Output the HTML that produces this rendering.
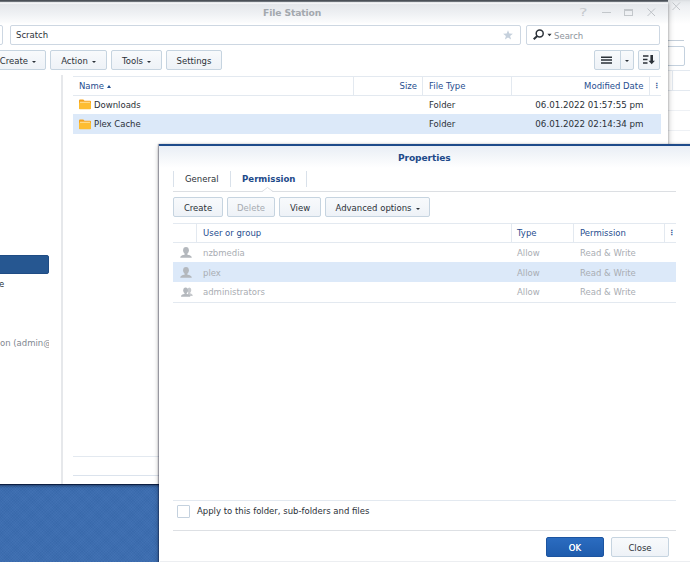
<!DOCTYPE html>
<html><head><meta charset="utf-8">
<style>
*{box-sizing:border-box;margin:0;padding:0}
html,body{width:690px;height:562px;overflow:hidden}
body{background:#3b6db1;background-image:repeating-linear-gradient(45deg,rgba(255,255,255,.015) 0 1px,rgba(0,0,0,.015) 1px 2px),repeating-linear-gradient(-45deg,rgba(255,255,255,.015) 0 1px,rgba(0,0,0,.015) 1px 2px);font-family:"DejaVu Sans","Liberation Sans",sans-serif;font-size:8.5px;color:#2b3138;position:relative}
.abs{position:absolute}
.t{position:absolute;white-space:nowrap;line-height:12px;height:12px}
.btn{position:absolute;height:20px;border:1px solid #c6d4e0;border-radius:2px;background:linear-gradient(#f8fafc,#eef2f7);text-align:center;line-height:20.6px;color:#2b3138;white-space:nowrap}
.inp{position:absolute;height:20px;border:1px solid #cdd7e2;border-radius:2px;background:#fff}
.hl{position:absolute;height:1px;background:#e3e9f0}
.vl{position:absolute;width:1px;background:#e3e9f0}
.hd{color:#1f4e8f}
.gr{color:#a9adb3}
.car{display:inline-block;width:0;height:0;border-left:2.8px solid transparent;border-right:2.8px solid transparent;border-top:2.8px solid #2b3138;vertical-align:middle;margin-left:4px}
</style></head><body>
<!-- back window on right -->
<div class="abs" id="backwin" style="left:660px;top:0px;width:30px;height:200px;background:linear-gradient(#d9dce0 0,#e6e9ec 2px,#eef0f3 6px,#ffffff 24px)">
  <svg class="abs" style="left:12px;top:2px" width="9" height="9" viewBox="0 0 9 9"><path d="M0.5 0.5L8 8M8 0.5L0.5 8" stroke="#c3c7cb" stroke-width="1" fill="none"/></svg>
  <div class="hl" style="left:8px;top:40px;width:16px;background:#c3ced9"></div>
  <div class="abs" style="left:0;top:46px;width:25px;height:20px;border:1px solid #c4d1de;border-radius:2px"></div>
  <div class="hl" style="left:8px;top:70px;width:22px"></div>
  <div class="vl" style="left:12px;top:71px;height:20px"></div>
  <div class="hl" style="left:8px;top:90px;width:22px"></div>
  <div class="hl" style="left:8px;top:110px;width:22px;background:#eef1f5"></div>
  <div class="hl" style="left:8px;top:130px;width:22px;background:#eef1f5"></div>
</div>
<!-- desktop top bar -->
<div class="abs" style="left:0;top:0;width:668px;height:2px;background:linear-gradient(#474d56 0,#5d646c 50%,#9da3aa 100%)"></div>
<!-- File Station window -->
<div class="abs" id="fs" style="left:-10px;top:2px;width:678px;height:482px;background:#fff;box-shadow:0 1px 0 rgba(8,22,55,.8),0 2px 2px rgba(0,0,20,.3),0 0 6px rgba(0,0,0,.3)">
  <div class="abs" style="left:0;top:0;width:678px;height:23px;background:linear-gradient(#d4d8dc 0,#f3f4f6 .9px,#f3f4f6 1.5px,#e4e7eb 2.1px,#eef0f3 11px,#fafbfc 20px,#ffffff 22px)"></div>
</div>
<div class="t" style="left:263px;top:7px;font-weight:bold;font-size:9.2px;color:#a3a8ae;letter-spacing:-.12px">File Station</div>
<!-- window icons -->
<div class="t" style="left:579.3px;top:6.8px;font-size:10px;color:#c6cace;transform:scaleX(1.6);transform-origin:0 0">?</div>
<div class="abs" style="left:601.5px;top:12px;width:9px;height:1px;background:#c3c7cb"></div>
<div class="abs" style="left:624px;top:9px;width:9px;height:7px;border:1px solid #c3c7cb;border-top-width:2px"></div>
<svg class="abs" style="left:647px;top:8px" width="9" height="9" viewBox="0 0 9 9"><path d="M0.5 0.5L8 8M8 0.5L0.5 8" stroke="#bfc3c8" stroke-width="1" fill="none"/></svg>
<!-- address row -->
<div class="inp" style="left:-10px;top:25px;width:13px"></div>
<div class="inp" style="left:10px;top:25px;width:511px"></div>
<div class="t" style="left:16px;top:29px">Scratch</div>
<svg class="abs" style="left:503px;top:30px" width="10" height="10" viewBox="0 0 10 10"><path d="M5 0.2L6.3 3.6L9.9 3.8L7.1 6L8.1 9.5L5 7.5L1.9 9.5L2.9 6L0.1 3.8L3.7 3.6Z" fill="#c5d0dc"/></svg>
<div class="inp" style="left:526px;top:25px;width:134px"></div>
<svg class="abs" style="left:532px;top:28px" width="22" height="13" viewBox="0 0 22 13"><circle cx="7.7" cy="5.4" r="3.5" stroke="#2b3138" stroke-width="1.5" fill="none"/><path d="M5.3 8L1.7 11.3" stroke="#2b3138" stroke-width="2" fill="none"/><path d="M15.4 5.8h4.2l-2.1 2.4z" fill="#2b3138"/></svg>
<div class="t gr" style="left:554px;top:29.5px;color:#8d949c">Search</div>
<!-- toolbar -->
<div class="btn" style="left:-20px;top:50px;width:66px;text-align:right;padding-right:9px">Create<span class="car"></span></div>
<div class="btn" style="left:50px;top:50px;width:57px">Action<span class="car"></span></div>
<div class="btn" style="left:111px;top:50px;width:51px">Tools<span class="car"></span></div>
<div class="btn" style="left:166px;top:50px;width:56px">Settings</div>
<div class="btn" style="left:594px;top:50px;width:27px;border-radius:2px 0 0 2px"></div>
<div class="btn" style="left:620px;top:50px;width:14px;border-radius:0 2px 2px 0"></div>
<div class="btn" style="left:638px;top:50px;width:22px"></div>
<svg class="abs" style="left:601px;top:56px" width="12" height="9" viewBox="0 0 12 9"><path d="M0 1.2h11M0 4.1h11M0 7h11" stroke="#2b3138" stroke-width="1.5"/></svg>
<div class="car abs" style="left:624.5px;top:60px;margin:0"></div>
<svg class="abs" style="left:643px;top:55px" width="13" height="10" viewBox="0 0 13 10"><path d="M0 1h5.5M0 4.5h4.5M0 8h4.5" stroke="#2b3138" stroke-width="1.5"/><path d="M8.7 0v6.5" stroke="#2b3138" stroke-width="2.6"/><path d="M5.5 5.8h6.4L8.7 9.3z" fill="#2b3138"/></svg>
<!-- sidebar -->
<div class="vl" style="left:61px;top:75px;height:409px;background:#e6e8eb;width:2px"></div>
<div class="abs" style="left:-5px;top:254.5px;width:53.7px;height:19px;background:#265791;border:1px solid #1f4c84;border-radius:2px"></div>
<div class="t" style="left:-1px;top:278px">e</div>
<div class="t" style="left:0px;top:337px;color:#7f8790;width:48.5px;overflow:hidden">on (admin@</div>
<!-- file table -->
<div class="hl" style="left:73px;top:76px;width:588px"></div>
<div class="hl" style="left:73px;top:95px;width:588px"></div>
<div class="vl" style="left:353px;top:77px;height:18px"></div>
<div class="vl" style="left:422px;top:77px;height:18px"></div>
<div class="vl" style="left:511px;top:77px;height:18px"></div>
<div class="vl" style="left:649px;top:77px;height:18px"></div>
<div class="t hd" style="left:79px;top:80px">Name <span style="display:inline-block;width:0;height:0;border-left:2.5px solid transparent;border-right:2.5px solid transparent;border-bottom:3px solid #1f4e8f;vertical-align:1.5px"></span></div>
<div class="t hd" style="left:360px;width:57px;top:80px;text-align:right">Size</div>
<div class="t hd" style="left:429px;top:80px">File Type</div>
<div class="t hd" style="left:520px;width:123.4px;top:80px;text-align:right">Modified Date</div>
<div class="t hd" style="left:653.2px;top:79.5px;font-weight:bold;font-size:7px">⋮</div>
<div class="abs" style="left:73px;top:114px;width:588px;height:20px;background:#dce9f9"></div>
<svg class="abs" style="left:79px;top:98px" width="12" height="12" viewBox="0 0 12 12"><path d="M0 2.6a1 1 0 0 1 1-1h3.3l1.2 1.2H11a1 1 0 0 1 1 1V10a1 1 0 0 1-1 1H1a1 1 0 0 1-1-1z" fill="#f5a31d"/><path d="M1 3.8h10v2H1z" fill="#fff6dc"/><path d="M0 5.2a.8.8 0 0 1 .8-.8H11.2a.8.8 0 0 1 .8.8V10.3a1 1 0 0 1-1 1H1a1 1 0 0 1-1-1z" fill="#fdbd31"/></svg>
<svg class="abs" style="left:79px;top:118px" width="12" height="12" viewBox="0 0 12 12"><path d="M0 2.6a1 1 0 0 1 1-1h3.3l1.2 1.2H11a1 1 0 0 1 1 1V10a1 1 0 0 1-1 1H1a1 1 0 0 1-1-1z" fill="#f5a31d"/><path d="M1 3.8h10v2H1z" fill="#fff6dc"/><path d="M0 5.2a.8.8 0 0 1 .8-.8H11.2a.8.8 0 0 1 .8.8V10.3a1 1 0 0 1-1 1H1a1 1 0 0 1-1-1z" fill="#fdbd31"/></svg>
<div class="t" style="left:94px;top:99px">Downloads</div>
<div class="t" style="left:94px;top:118px">Plex Cache</div>
<div class="t" style="left:429px;top:99px">Folder</div>
<div class="t" style="left:429px;top:118px">Folder</div>
<div class="t" style="left:500px;width:143.6px;text-align:right;top:99px;font-size:8.7px">06.01.2022 01:57:55 pm</div>
<div class="t" style="left:500px;width:143.6px;text-align:right;top:118px;font-size:8.7px">06.01.2022 02:14:34 pm</div>
<div class="hl" style="left:73px;top:456px;width:588px"></div>
<div class="hl" style="left:73px;top:475px;width:588px;background:#dbe3ed"></div>
<!-- Properties dialog -->
<div class="abs" id="dlg" style="left:159px;top:144px;width:540px;height:430px;background:#fff;border-top:2px solid #1d4a8a;box-shadow:-1px 0 1px rgba(0,0,30,.3),0 2px 5px rgba(0,0,0,.36)">
  <div class="abs" style="left:0;top:0;width:540px;height:22px;background:linear-gradient(#e9eef5 0,#ffffff 100%)"></div>
</div>
<div class="t" style="left:398px;top:152px;font-weight:bold;font-size:9.1px;color:#1d4a8a;letter-spacing:-.1px">Properties</div>
<!-- tabs -->
<div class="vl" style="left:173px;top:170.5px;height:16px;background:#d9e1ea"></div>
<div class="vl" style="left:230px;top:170.5px;height:16px;background:#d9e1ea"></div>
<div class="vl" style="left:306px;top:170.5px;height:16px;background:#d9e1ea"></div>
<div class="t" style="left:185px;top:172.5px">General</div>
<div class="t" style="left:242px;top:172.5px;font-weight:bold;color:#1d4a8a;font-size:8.6px">Permission</div>
<div class="hl" style="left:173px;top:191px;width:503px;background:#dcdfe3"></div>
<svg class="abs" style="left:262px;top:187px" width="11" height="6" viewBox="0 0 11 6"><path d="M0 4.5L5.5 0.5L11 4.5" fill="#fff" stroke="#dcdfe3" stroke-width="1"/><rect x="1" y="4.2" width="9" height="2" fill="#fff"/></svg>
<!-- dialog toolbar -->
<div class="btn" style="left:173px;top:197px;width:50px">Create</div>
<div class="btn" style="left:227px;top:197px;width:48px;color:#a6abb1">Delete</div>
<div class="btn" style="left:279px;top:197px;width:42px">View</div>
<div class="btn" style="left:325px;top:197px;width:105px">Advanced options<span class="car"></span></div>
<!-- dialog table -->
<div class="hl" style="left:173px;top:223px;width:503px"></div>
<div class="hl" style="left:173px;top:242px;width:503px"></div>
<div class="vl" style="left:196px;top:224px;height:18px"></div>
<div class="vl" style="left:511px;top:224px;height:18px"></div>
<div class="vl" style="left:573px;top:224px;height:18px"></div>
<div class="vl" style="left:664px;top:224px;height:18px"></div>
<div class="t hd" style="left:203px;top:227px">User or group</div>
<div class="t hd" style="left:517px;top:227px">Type</div>
<div class="t hd" style="left:580px;top:227px">Permission</div>
<div class="t hd" style="left:668.2px;top:226.5px;font-weight:bold;font-size:7px">⋮</div>
<div class="abs" style="left:173px;top:262px;width:503px;height:20px;background:#dce9f9"></div>
<div class="hl" style="left:173px;top:302px;width:503px"></div>
<svg class="abs usr" style="left:180px;top:245.6px" width="12" height="12" viewBox="0 0 12 12"><ellipse cx="6" cy="4.3" rx="2.9" ry="3.4" fill="#b4b8bd"/><path d="M4.6 6.5h2.8v2.2c2.6.4 4.4 1 4.4 3.1H.2c0-2.1 1.8-2.7 4.4-3.1z" fill="#b4b8bd"/></svg>
<svg class="abs usr" style="left:180px;top:265.6px" width="12" height="12" viewBox="0 0 12 12"><ellipse cx="6" cy="4.3" rx="2.9" ry="3.4" fill="#b4b8bd"/><path d="M4.6 6.5h2.8v2.2c2.6.4 4.4 1 4.4 3.1H.2c0-2.1 1.8-2.7 4.4-3.1z" fill="#b4b8bd"/></svg>
<svg class="abs usr" style="left:181px;top:287.2px" width="12" height="10" viewBox="0 0 12 10"><ellipse cx="8.3" cy="3.1" rx="2" ry="2.5" fill="#c6c9cd"/><path d="M7.3 5h2v1.6c1.6.3 2.4 1 2.4 2.5H6.5z" fill="#c6c9cd"/><ellipse cx="4.6" cy="3.3" rx="2.4" ry="2.9" fill="#b4b8bd"/><path d="M3.5 5.4h2.2v1.7c2.2.3 3.6.9 3.6 2.6H0c0-1.7 1.4-2.3 3.5-2.6z" fill="#b4b8bd"/></svg>
<div class="t gr" style="left:203px;top:246.5px">nzbmedia</div>
<div class="t gr" style="left:203px;top:266.5px">plex</div>
<div class="t gr" style="left:203px;top:286px">administrators</div>
<div class="t gr" style="left:517px;top:246.5px">Allow</div>
<div class="t gr" style="left:517px;top:266.5px">Allow</div>
<div class="t gr" style="left:517px;top:286px">Allow</div>
<div class="t gr" style="left:580px;top:246.5px">Read &amp; Write</div>
<div class="t gr" style="left:580px;top:266.5px">Read &amp; Write</div>
<div class="t gr" style="left:580px;top:286px">Read &amp; Write</div>
<!-- footer -->
<div class="hl" style="left:160px;top:561px;width:530px;background:#eceef1"></div>
<div class="hl" style="left:173px;top:500px;width:503px"></div>
<div class="abs" style="left:177px;top:505px;width:12.6px;height:12.6px;border:1px solid #c4d1de;border-radius:1px;background:#fff"></div>
<div class="t" style="left:197px;top:505px">Apply to this folder, sub-folders and files</div>
<div class="hl" style="left:173px;top:529.5px;width:503px;background:#dde0e4"></div>
<div class="btn" style="left:546px;top:537px;width:58px;background:linear-gradient(#2b6cc0,#1f5cad);border-color:#1c54a0;color:#fff;text-shadow:0 0 .4px #fff">OK</div>
<div class="btn" style="left:611px;top:537px;width:58px">Close</div>
</body></html>
